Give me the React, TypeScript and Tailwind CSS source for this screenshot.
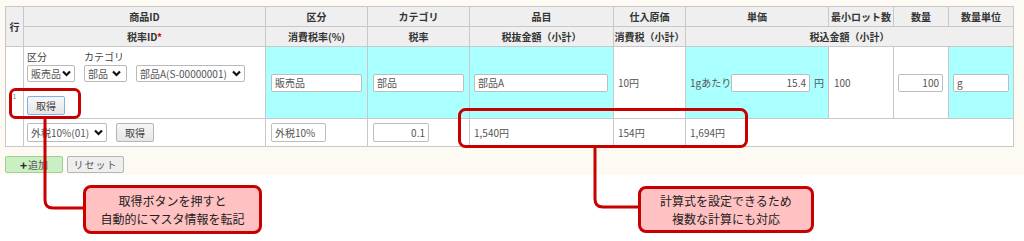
import type { ReactNode } from "react";

const FONT = { fontFamily: '"Noto Sans CJK JP", "Noto Sans", sans-serif' };

function Chevron() {
  return (
    <svg width="9" height="7" viewBox="0 0 9 7" className="shrink-0">
      <path d="M1 1.5 L4.5 5 L8 1.5" fill="none" stroke="#111" strokeWidth="2.2" />
    </svg>
  );
}

function FakeSelect({ label, className }: { label: string; className: string }) {
  return (
    <div
      className={`flex items-center justify-between rounded-[2px] border border-[#b9b9b9] bg-white pl-[3px] pr-[3px] text-[10px] text-[#555] ${className}`}
    >
      <span className="whitespace-nowrap">{label}</span>
      <Chevron />
    </div>
  );
}

function Btn({ label, focused }: { label: string; focused?: boolean }) {
  return (
    <button
      className={`flex h-[19px] w-[38px] items-center justify-center rounded-[2px] border bg-gradient-to-b from-[#f7f7f7] to-[#e6e6e6] text-[10px] text-[#444] ${
        focused ? "border-[#7fb2e5]" : "border-[#b5b5b5]"
      }`}
    >
      {label}
    </button>
  );
}

function Field({ value, className, right }: { value: string; className: string; right?: boolean }) {
  return (
    <div
      className={`flex h-[18px] items-center rounded-[2px] border border-[#bdbdbd] bg-white px-[3px] text-[10px] text-[#555] ${
        right ? "justify-end" : ""
      } ${className}`}
    >
      {value}
    </div>
  );
}

function Th({ children, colSpan, rowSpan }: { children: ReactNode; colSpan?: number; rowSpan?: number }) {
  return (
    <th
      colSpan={colSpan}
      rowSpan={rowSpan}
      className="border border-[#c8c8c8] bg-[#efefef] p-0 text-center align-middle text-[10px] font-bold text-[#333]"
    >
      {children}
    </th>
  );
}

export default function App() {
  return (
    <div className="relative h-[241px] w-[1024px] overflow-hidden bg-white" style={FONT}>
      <div className="h-[175px] bg-[#fcfaf3] px-[5px] pt-[6px]">
        <table className="w-[1008px] table-fixed border-collapse bg-white">
          <colgroup>
            <col className="w-[18px]" />
            <col className="w-[242px]" />
            <col className="w-[102px]" />
            <col className="w-[102px]" />
            <col className="w-[144px]" />
            <col className="w-[72px]" />
            <col className="w-[143px]" />
            <col className="w-[65px]" />
            <col className="w-[55px]" />
            <col className="w-[65px]" />
          </colgroup>
          <thead>
            <tr className="h-[20px]">
              <Th rowSpan={2}>行</Th>
              <Th>商品ID</Th>
              <Th>区分</Th>
              <Th>カテゴリ</Th>
              <Th>品目</Th>
              <Th>仕入原価</Th>
              <Th>単価</Th>
              <Th>最小ロット数</Th>
              <Th>数量</Th>
              <Th>数量単位</Th>
            </tr>
            <tr className="h-[20px]">
              <Th>
                税率ID<span className="text-[#e00]">*</span>
              </Th>
              <Th>消費税率(%)</Th>
              <Th>税率</Th>
              <Th>税抜金額（小計）</Th>
              <Th>消費税（小計）</Th>
              <Th colSpan={4}>税込金額（小計）</Th>
            </tr>
          </thead>
          <tbody className="text-[10px] text-[#555]">
            <tr className="h-[72px]">
              <td rowSpan={2} className="border border-[#c8c8c8] p-0 text-center align-middle text-[7px] text-[#888]">
                1
              </td>
              <td className="border border-[#c8c8c8] px-[3px] align-top">
                <div className="flex gap-[9px] pt-[3px]">
                  <div className="flex flex-col">
                    <span className="h-[14px] text-[10px] leading-[14px] text-[#444]">区分</span>
                    <FakeSelect label="販売品" className="mt-[1px] h-[17px] w-[48px]" />
                  </div>
                  <div className="flex flex-col">
                    <span className="h-[14px] text-[10px] leading-[14px] text-[#444]">カテゴリ</span>
                    <FakeSelect label="部品" className="mt-[1px] h-[17px] w-[43px] pr-[5px]" />
                  </div>
                  <div className="flex flex-col">
                    <span className="h-[14px]" />
                    <FakeSelect label="部品A(S-00000001)" className="mt-[1px] h-[17px] w-[109px]" />
                  </div>
                </div>
                <div className="mt-[14px]">
                  <Btn label="取得" focused />
                </div>
              </td>
              <td className="border border-[#c8c8c8] bg-[#aaffff] px-[5px]">
                <Field value="販売品" className="w-[91px]" />
              </td>
              <td className="border border-[#c8c8c8] bg-[#aaffff] px-[5px]">
                <Field value="部品" className="w-[91px]" />
              </td>
              <td className="border border-[#c8c8c8] bg-[#aaffff] px-[4px]">
                <Field value="部品A" className="w-[134px]" />
              </td>
              <td className="border border-[#c8c8c8] px-[4px]">10円</td>
              <td className="border border-[#c8c8c8] bg-[#aaffff] px-[4px]">
                <div className="flex items-center">
                  <span className="w-[41px] whitespace-nowrap">1gあたり</span>
                  <Field value="15.4" right className="w-[81px]" />
                  <span className="ml-[4px]">円</span>
                </div>
              </td>
              <td className="border border-[#c8c8c8] px-[5px]">100</td>
              <td className="border border-[#c8c8c8] px-[4px]">
                <Field value="100" right className="w-[45px]" />
              </td>
              <td className="border border-[#c8c8c8] bg-[#aaffff] px-[4px]">
                <Field value="g" className="w-[56px]" />
              </td>
            </tr>
            <tr className="h-[28px]">
              <td className="border border-[#c8c8c8] px-[3px]">
                <div className="flex items-center gap-[9px]">
                  <FakeSelect label="外税10%(01)" className="h-[19px] w-[80px]" />
                  <Btn label="取得" />
                </div>
              </td>
              <td className="border border-[#c8c8c8] px-[5px]">
                <Field value="外税10%" className="h-[19px] w-[55px]" />
              </td>
              <td className="border border-[#c8c8c8] px-[4px]">
                <Field value="0.1" right className="ml-auto mr-[36px] h-[19px] w-[56px]" />
              </td>
              <td className="border border-[#c8c8c8] px-[4px]">1,540円</td>
              <td className="border border-[#c8c8c8] px-[4px]">154円</td>
              <td colSpan={4} className="border border-[#c8c8c8] px-[4px]">
                1,694円
              </td>
            </tr>
          </tbody>
        </table>
        <div className="mt-[9px] flex gap-[4px]">
          <button className="flex h-[17px] w-[58px] items-center justify-center rounded-[2px] border border-[#9fcf98] bg-[#c9efc2] text-[10px] text-[#555]">
            <span className="mr-[1px] text-[12px] font-bold leading-none text-[#222]">+</span>追加
          </button>
          <button className="flex h-[17px] w-[57px] items-center justify-center rounded-[2px] border border-[#b5b5b5] bg-[#eeeeee] text-[10px] tracking-[1px] text-[#555]">
            リセット
          </button>
        </div>
      </div>

      <svg className="pointer-events-none absolute left-0 top-0" width="1024" height="241">
        <rect x="10.5" y="89.5" width="69" height="28" rx="5" fill="none" stroke="#c80000" strokeWidth="3" />
        <rect x="459.5" y="109.5" width="287" height="37" rx="6" fill="none" stroke="#c80000" strokeWidth="3" />
        <path d="M45 118 V200 Q45 208 53 208 H85" fill="none" stroke="#c80000" strokeWidth="3" />
        <path d="M595 147 V199 Q595 207 603 207 H640" fill="none" stroke="#c80000" strokeWidth="3" />
      </svg>

      <div className="absolute left-[83px] top-[185px] flex h-[49px] w-[179px] flex-col items-center justify-center rounded-[8px] border-[3px] border-[#c80000] bg-[#ffc1c1] text-[12px] leading-[18px] text-[#222]">
        <span>取得ボタンを押すと</span>
        <span>自動的にマスタ情報を転記</span>
      </div>
      <div className="absolute left-[638px] top-[186px] flex h-[47px] w-[176px] flex-col items-center justify-center rounded-[8px] border-[3px] border-[#c80000] bg-[#ffc1c1] text-[12px] leading-[18px] text-[#222]">
        <span>計算式を設定できるため</span>
        <span>複数な計算にも対応</span>
      </div>
    </div>
  );
}
